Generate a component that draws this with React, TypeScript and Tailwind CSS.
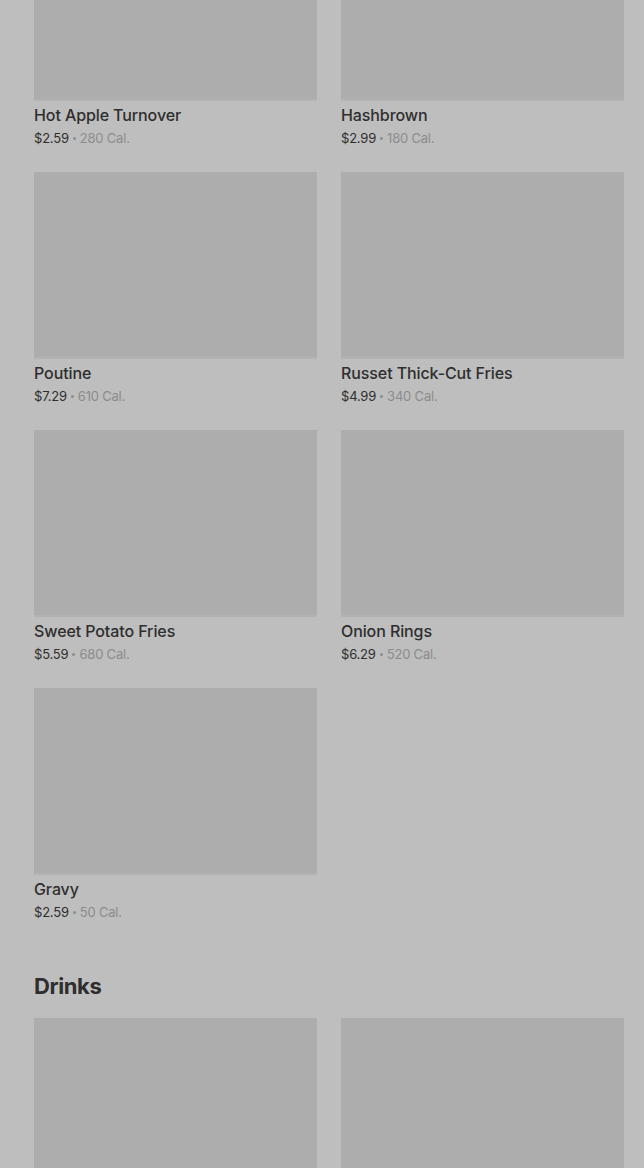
const sides = [
  { name: "Hot Apple Turnover", price: "$2.59", cal: "280 Cal." },
  { name: "Hashbrown", price: "$2.99", cal: "180 Cal." },
  { name: "Poutine", price: "$7.29", cal: "610 Cal." },
  { name: "Russet Thick-Cut Fries", price: "$4.99", cal: "340 Cal." },
  { name: "Sweet Potato Fries", price: "$5.59", cal: "680 Cal." },
  { name: "Onion Rings", price: "$6.29", cal: "520 Cal." },
  { name: "Gravy", price: "$2.59", cal: "50 Cal." },
];

type Item = { name: string; price: string; cal: string };

const ItemCard = ({ item }: { item: Item }) => (
  <div className="flex flex-col pb-[24px]">
    <div className="h-[187px] w-full bg-[#adadad] border-b-[2px] border-[#b3b3b3]" />
    <div className="mt-[2px] text-[16px] leading-[24px] font-medium text-[#2e2e2e] tracking-[-0.1px]">
      {item.name}
    </div>
    <div className="mt-[1px] flex items-center text-[13px] leading-[20px] text-[#2e2e2e] tracking-[-0.2px]">
      <span>{item.price}</span>
      <span className="mx-[4px] inline-block h-[3px] w-[3px] rounded-full bg-[#8c8c8c]" />
      <span className="text-[#8c8c8c]">{item.cal}</span>
    </div>
  </div>
);

export default function App() {
  return (
    <div
      className="min-h-[1168px] w-full bg-[#bebebe] overflow-hidden"
      style={{ fontFamily: "Inter, 'Liberation Sans', sans-serif" }}
    >
      <div className="pl-[34px] pr-[20px] -mt-[86px]">
        <div className="grid grid-cols-2 gap-x-[24px]">
          {sides.map((item) => (
            <ItemCard key={item.name} item={item} />
          ))}
        </div>

        <h2 className="mt-[26px] text-[22px] leading-[28px] font-bold text-[#2e2e2e] tracking-[-0.4px]">
          Drinks
        </h2>

        <div className="mt-[18px] grid grid-cols-2 gap-x-[24px]">
          <div className="h-[187px] bg-[#adadad]" />
          <div className="h-[187px] bg-[#adadad]" />
        </div>
      </div>
    </div>
  );
}
